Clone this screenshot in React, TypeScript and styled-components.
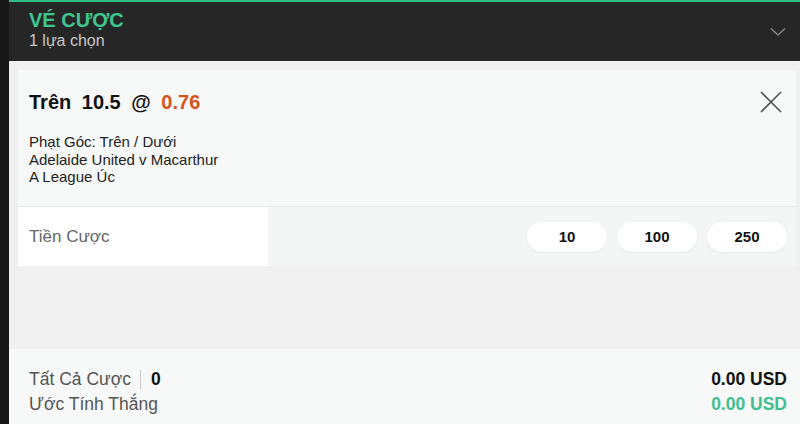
import React from "react";
import styled, { createGlobalStyle } from "styled-components";

const Global = createGlobalStyle`
  html, body { margin: 0; padding: 0; }
  body { font-family: "Liberation Sans", Arial, sans-serif; background: #f0f0f0; }
  #root { width: 800px; height: 424px; }
`;

const Page = styled.div`
  display: flex;
  width: 800px;
  height: 424px;
  overflow: hidden;
`;

const SideStrip = styled.div`
  width: 9px;
  background: #171717;
  flex-shrink: 0;
`;

const Slip = styled.div`
  flex: 1;
  display: flex;
  flex-direction: column;
  background: #f0f0f0;
`;

const Header = styled.div`
  height: 59px;
  border-top: 2px solid #2fbf89;
  background: #262626;
  display: flex;
  align-items: center;
  justify-content: space-between;
  padding: 0 14px 0 20px;
  box-sizing: content-box;
`;

const HeaderText = styled.div`
  display: flex;
  flex-direction: column;
  margin-top: -5px;
`;

const Title = styled.div`
  color: #3ec690;
  font-weight: bold;
  font-size: 20px;
  line-height: 22px;
`;

const Subtitle = styled.div`
  color: #c8c8c8;
  font-size: 16px;
  line-height: 19px;
`;

const Body = styled.div`
  flex: 1;
  padding: 9px 4px 0 9px;
`;

const Card = styled.div`
  background: #f7f8f8;
  display: flex;
  flex-direction: column;
`;

const SelectionTop = styled.div`
  display: flex;
  justify-content: space-between;
  padding: 20px 14px 0 11px;
  height: 137px;
  box-sizing: border-box;
  border-bottom: 1px solid #ececec;
`;

const SelectionInfo = styled.div`
  display: flex;
  flex-direction: column;
`;

const Pick = styled.div`
  font-weight: bold;
  font-size: 20px;
  line-height: 24px;
  color: #111;
  word-spacing: 5px;
`;

const Odds = styled.span<{ $c: string }>`
  color: ${(p) => p.$c};
`;

const Desc = styled.div`
  margin-top: 19px;
  font-size: 15px;
  line-height: 17.5px;
  color: #222;
`;

const CloseBtn = styled.div`
  width: 22px;
  height: 22px;
  margin-top: 1px;
`;

const StakeRow = styled.div`
  display: flex;
  align-items: center;
  height: 59px;
  background: #f4f5f5;
`;

const StakeInput = styled.div`
  width: 250px;
  height: 100%;
  background: #ffffff;
  display: flex;
  align-items: center;
  padding-left: 11px;
  box-sizing: border-box;
  font-size: 17px;
  color: #666;
`;

const Quick = styled.div`
  margin-left: auto;
  display: flex;
  gap: 10px;
  padding-right: 9px;
`;

const QuickBtn = styled.div`
  width: 80px;
  height: 30px;
  border-radius: 15px;
  background: #fff;
  box-shadow: 0 1px 2px rgba(0, 0, 0, 0.06);
  display: flex;
  align-items: center;
  justify-content: center;
  font-weight: bold;
  font-size: 15px;
  color: #111;
`;

const Footer = styled.div`
  height: 75px;
  background: #f7f8f8;
  display: flex;
  justify-content: space-between;
  padding: 18px 13px 0 20px;
  box-sizing: border-box;
`;

const FooterCol = styled.div<{ $right?: boolean }>`
  display: flex;
  flex-direction: column;
  align-items: ${(p) => (p.$right ? "flex-end" : "flex-start")};
`;

const FooterLine = styled.div<{ $color?: string; $bold?: boolean }>`
  font-size: 17.5px;
  line-height: 25px;
  color: ${(p) => p.$color || "#555"};
  font-weight: ${(p) => (p.$bold ? "bold" : "normal")};
  display: flex;
  align-items: center;
`;

const Divider = styled.span`
  display: inline-block;
  width: 1px;
  height: 19px;
  background: #cfcfcf;
  margin: 0 10px 0 9px;
`;

const Count = styled.span`
  font-weight: bold;
  color: #111;
`;

export default function App() {
  return (
    <>
      <Global />
      <Page>
        <SideStrip />
        <Slip>
          <Header>
            <HeaderText>
              <Title>VÉ CƯỢC</Title>
              <Subtitle>1 lựa chọn</Subtitle>
            </HeaderText>
            <svg width="16" height="10" viewBox="0 0 16 10">
              <path d="M1 1.5 L8 8 L15 1.5" fill="none" stroke="#8a8a8a" strokeWidth="1.3" />
            </svg>
          </Header>
          <Body>
            <Card>
              <SelectionTop>
                <SelectionInfo>
                  <Pick>
                    Trên 10.5 @ <Odds $c="#d4541f">0.76</Odds>
                  </Pick>
                  <Desc>
                    Phạt Góc: Trên / Dưới
                    <br />
                    Adelaide United v Macarthur
                    <br />
                    A League Úc
                  </Desc>
                </SelectionInfo>
                <CloseBtn>
                  <svg width="22" height="22" viewBox="0 0 22 22">
                    <path d="M1 1 L21 21 M21 1 L1 21" stroke="#555" strokeWidth="1.6" fill="none" />
                  </svg>
                </CloseBtn>
              </SelectionTop>
              <StakeRow>
                <StakeInput>Tiền Cược</StakeInput>
                <Quick>
                  <QuickBtn>10</QuickBtn>
                  <QuickBtn>100</QuickBtn>
                  <QuickBtn>250</QuickBtn>
                </Quick>
              </StakeRow>
            </Card>
          </Body>
          <Footer>
            <FooterCol>
              <FooterLine>
                Tất Cả Cược<Divider />
                <Count>0</Count>
              </FooterLine>
              <FooterLine>Ước Tính Thắng</FooterLine>
            </FooterCol>
            <FooterCol $right>
              <FooterLine $bold $color="#111">0.00 USD</FooterLine>
              <FooterLine $bold $color="#3fbf8f">0.00 USD</FooterLine>
            </FooterCol>
          </Footer>
        </Slip>
      </Page>
    </>
  );
}
